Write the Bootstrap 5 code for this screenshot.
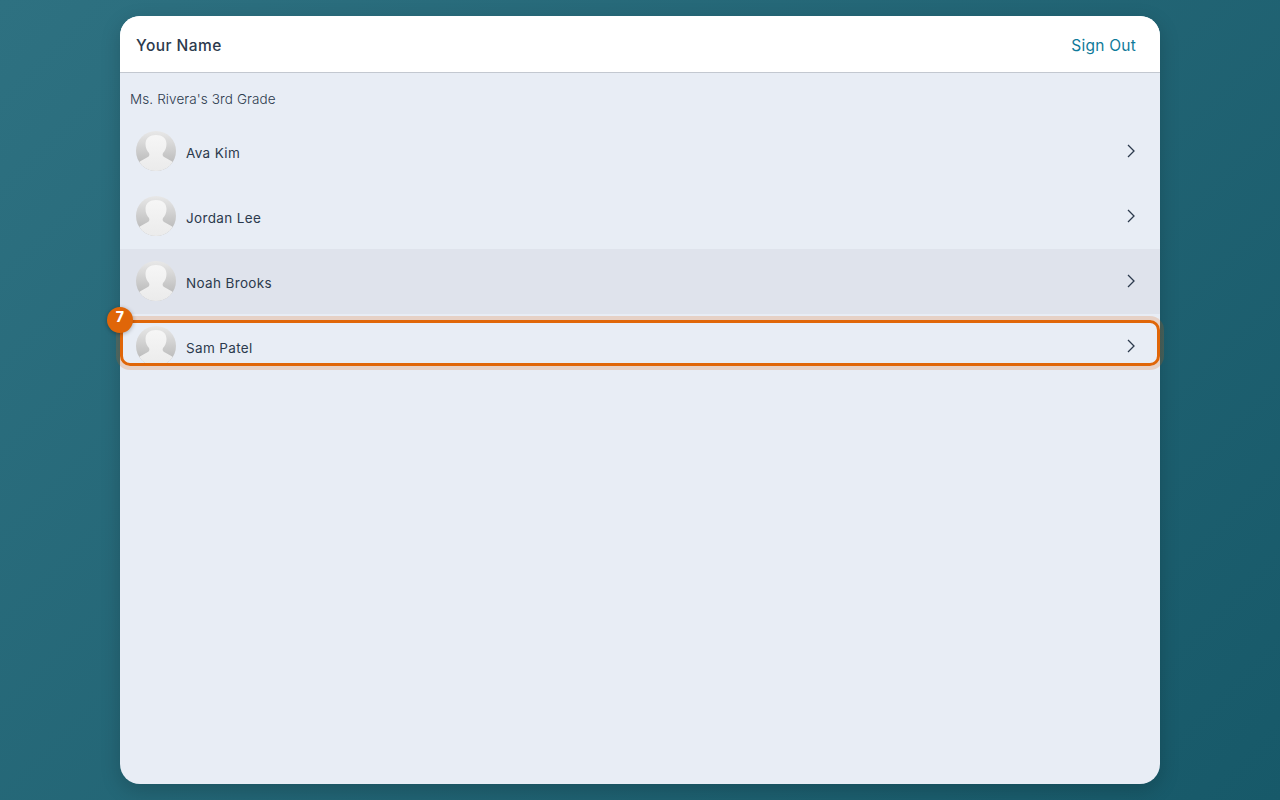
<!DOCTYPE html>
<html lang="en">

<head>
  <meta charset="UTF-8">
  <meta name="viewport" content="width=device-width, initial-scale=1.0">
  <title>Roster</title>
  <link rel="stylesheet" href="https://cdn.jsdelivr.net/npm/bootstrap@5.3.1/dist/css/bootstrap.min.css">
  <style>
    body {
      height: 100vh;
      overflow: hidden;
      padding: 16px 120px;
      background: linear-gradient(135deg, #2e7181, #175969);
      font-family: "Inter", "Noto Sans", sans-serif;
      color: #2c3a4d;
    }

    .app-panel {
      height: 768px;
      background: #e8edf5;
      border-radius: 20px;
      box-shadow: 0 6px 20px rgba(0, 0, 0, 0.18);
    }

    .app-head {
      height: 57px;
      background: #fff;
      border-bottom: 1px solid #c3c8d0;
      border-radius: 20px 20px 0 0;
      padding: 3px 24px 0 16px;
    }

    .user-name {
      font-size: 15.5px;
      font-weight: 500;
      letter-spacing: 0.45px;
    }

    .sign-out {
      font-size: 15.5px;
      color: #0f7a9a;
      text-decoration: none;
      letter-spacing: 0.25px;
    }

    .class-title {
      font-size: 13.5px;
      font-weight: 300;
      line-height: 20px;
      padding: 16px 10px 10px;
      color: #2c3a4d;
      letter-spacing: 0.1px;
    }

    .kid-row {
      height: 65px;
      padding: 0 25px 0 16px;
      font-size: 13.5px;
      letter-spacing: 0.35px;
      position: relative;
    }

    .kid-row.is-hover {
      background: #dfe3ec;
    }

    .kid-face {
      width: 40px;
      height: 40px;
      margin-top: -1px;
      margin-right: 10px;
      flex-shrink: 0;
    }

    .kid-name {
      margin-top: 4px;
    }

    .kid-arrow {
      margin-top: -1px;
    }

    .step-ring {
      position: absolute;
      left: 0;
      right: 0;
      top: 6px;
      height: 46px;
      border: 3px solid #e06608;
      border-radius: 10px;
      box-shadow: 0 0 0 4px rgba(224, 102, 8, 0.2);
    }

    .step-dot {
      position: absolute;
      left: -16px;
      top: -16px;
      width: 26px;
      height: 26px;
      border-radius: 50%;
      background: #e06608;
      color: #fff;
      font-size: 14px;
      font-weight: 800;
      line-height: 20px;
      text-align: center;
      box-shadow: 0 1px 4px rgba(0, 0, 0, 0.3);
    }
  </style>
</head>

<body>
  <svg width="0" height="0" class="position-absolute">
    <defs>
      <linearGradient id="faceBg" x1="0" y1="0" x2="0" y2="1">
        <stop offset="0" stop-color="#e8e8e8" />
        <stop offset="0.8" stop-color="#bcbcbc" />
      </linearGradient>
      <linearGradient id="faceFg" x1="0" y1="0" x2="0" y2="1">
        <stop offset="0" stop-color="#f6f6f6" />
        <stop offset="1" stop-color="#ebebeb" />
      </linearGradient>
      <clipPath id="faceClip">
        <circle cx="20" cy="20" r="20" />
      </clipPath>
      <symbol id="face" viewBox="0 0 40 40">
        <circle cx="20" cy="20" r="20" fill="url(#faceBg)" />
        <path clip-path="url(#faceClip)" d="M20 4C26 4 30.500 7 30.500 13 30.500 17 29 20 27 22 26 24 27 25.500 29 26.500 32 28 35 29.500 38 32V40H2V32C5 29.500 8 28 11 26.500 13 25.500 14 24 13 22 11 20 9.500 17 9.500 13 9.500 7 14 4 20 4Z" fill="url(#faceFg)" />
      </symbol>
    </defs>
  </svg>

  <div class="app-panel d-flex flex-column">
    <div class="app-head d-flex align-items-center justify-content-between flex-shrink-0">
      <span class="user-name">Your Name</span>
      <a href="#" class="sign-out">Sign Out</a>
    </div>

    <div class="class-title">Ms. Rivera's 3rd Grade</div>

    <div class="kid-row d-flex align-items-center">
      <svg class="kid-face"><use href="#face" /></svg>
      <span class="kid-name flex-grow-1">Ava Kim</span>
      <svg class="kid-arrow" width="8" height="14" viewBox="0 0 8 14" fill="none" stroke="#2c3a4d" stroke-width="1.3"><path d="M1 1 7 7 1 13" /></svg>
    </div>
    <div class="kid-row d-flex align-items-center">
      <svg class="kid-face"><use href="#face" /></svg>
      <span class="kid-name flex-grow-1">Jordan Lee</span>
      <svg class="kid-arrow" width="8" height="14" viewBox="0 0 8 14" fill="none" stroke="#2c3a4d" stroke-width="1.3"><path d="M1 1 7 7 1 13" /></svg>
    </div>
    <div class="kid-row is-hover d-flex align-items-center">
      <svg class="kid-face"><use href="#face" /></svg>
      <span class="kid-name flex-grow-1">Noah Brooks</span>
      <svg class="kid-arrow" width="8" height="14" viewBox="0 0 8 14" fill="none" stroke="#2c3a4d" stroke-width="1.3"><path d="M1 1 7 7 1 13" /></svg>
    </div>
    <div class="kid-row d-flex align-items-center">
      <svg class="kid-face"><use href="#face" /></svg>
      <span class="kid-name flex-grow-1">Sam Patel</span>
      <svg class="kid-arrow" width="8" height="14" viewBox="0 0 8 14" fill="none" stroke="#2c3a4d" stroke-width="1.3"><path d="M1 1 7 7 1 13" /></svg>
      <div class="step-ring"><span class="step-dot">7</span></div>
    </div>
  </div>

  <script src="https://cdn.jsdelivr.net/npm/bootstrap@5.3.1/dist/js/bootstrap.bundle.min.js"></script>
</body>

</html>
